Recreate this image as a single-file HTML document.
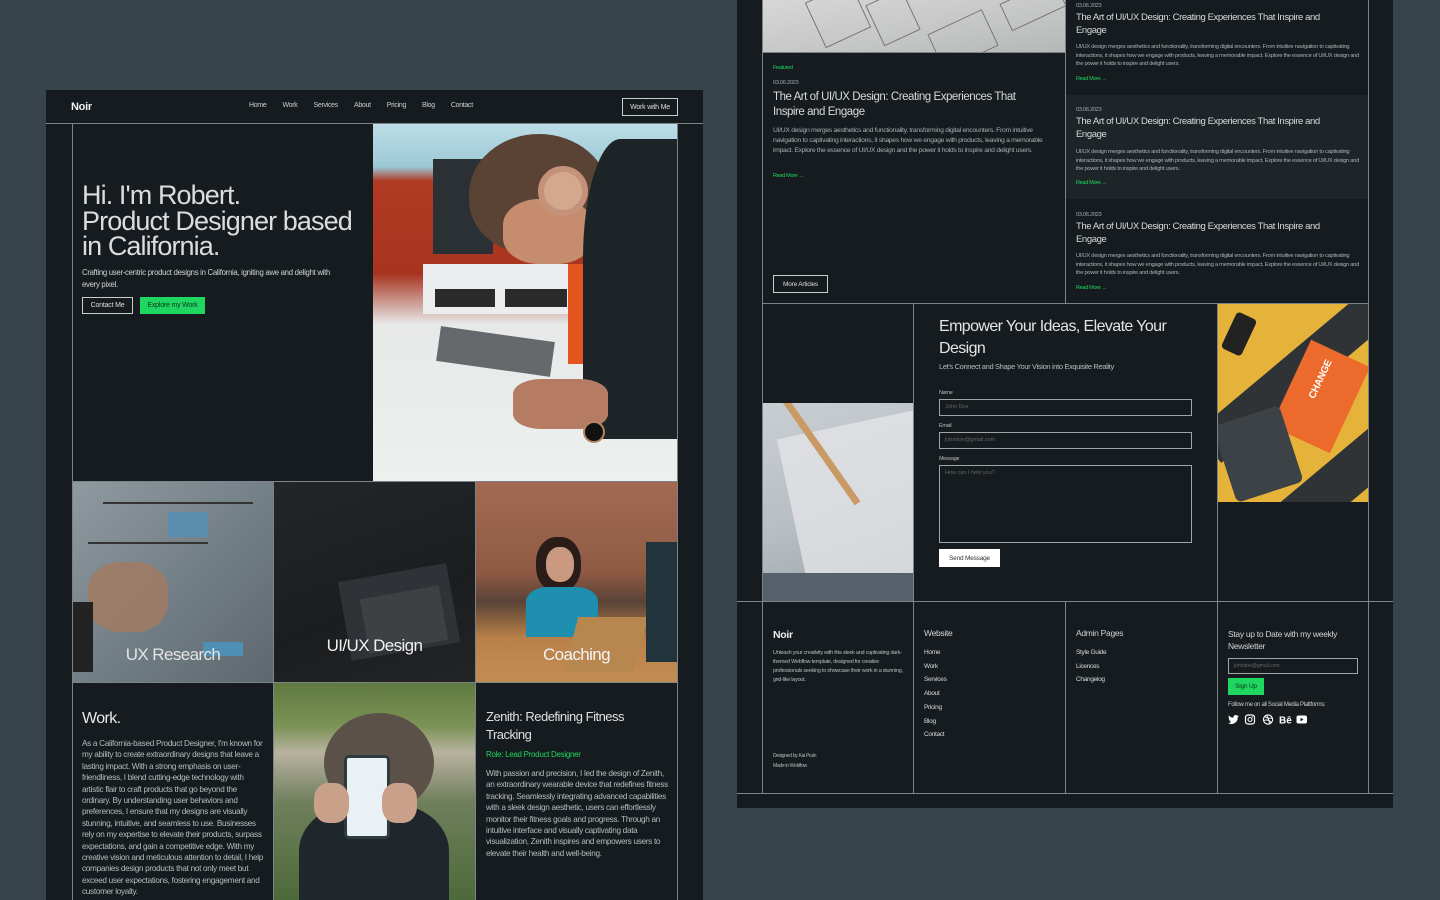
<!DOCTYPE html>
<html><head><meta charset="utf-8"><style>
*{margin:0;padding:0;box-sizing:border-box}
body{width:1440px;height:900px;background:#38444b;overflow:hidden;position:relative;font-family:"Liberation Sans",sans-serif;color:#e6e8e8}
.p{position:absolute;background:#151b1e}
.a{position:absolute}
.vl{position:absolute;width:1px;background:#7d8488}
.hl{position:absolute;height:1px;background:#7d8488}
.t{position:absolute;letter-spacing:-0.3px}
.g{color:#1ed660}
.btn{position:absolute;border:1px solid #c9cccd;font-size:7px;color:#ddd;display:flex;align-items:center;justify-content:center;letter-spacing:-0.2px}
.sm{font-size:6px;color:#a8adb0;line-height:9px;letter-spacing:-0.2px}
.inp{position:absolute;border:1px solid #a0a5a8;font-size:5.5px;color:#666;padding:4px 5px}
</style></head><body>

<!-- LEFT PANEL -->
<div class="p" style="left:46px;top:90px;width:657px;height:810px"></div>
<div class="t" style="left:71px;top:101px;font-size:11px;font-weight:bold;color:#eee">Noir</div>
<div class="t" style="left:249px;top:102px;font-size:7px;color:#ccc;word-spacing:0"><span style="margin-right:16px">Home</span><span style="margin-right:16px">Work</span><span style="margin-right:16px">Services</span><span style="margin-right:16px">About</span><span style="margin-right:16px">Pricing</span><span style="margin-right:16px">Blog</span><span>Contact</span></div>
<div class="btn" style="left:622px;top:98px;width:56px;height:18px">Work with Me</div>
<div class="hl" style="left:46px;top:123px;width:657px"></div>
<div class="vl" style="left:72px;top:124px;height:776px"></div>
<div class="vl" style="left:677px;top:124px;height:776px"></div>

<div class="t" style="left:82px;top:183px;font-size:27px;line-height:25.5px;letter-spacing:-0.9px;color:#dcdcdc;font-weight:300">Hi. I'm Robert.<br>Product Designer based<br>in California.</div>
<div class="t" style="left:82px;top:267px;font-size:7.8px;line-height:12px;color:#d0d3d4;width:258px">Crafting user-centric product designs in California, igniting awe and delight with every pixel.</div>
<div class="btn" style="left:82px;top:297px;width:51px;height:17px">Contact Me</div>
<div class="btn" style="left:140px;top:297px;width:65px;height:17px;background:#1ed660;border-color:#1ed660;color:#0d3a1e">Explore my Work</div>

<!-- hero image -->
<div class="a" style="left:373px;top:124px;width:304px;height:357px;overflow:hidden;background:linear-gradient(180deg,#bcdde6 0%,#9cc9d6 12%,#b03a22 16%,#a83420 42%,#e7e8e8 56%,#eef0f0 100%)">
  <div class="a" style="left:60px;top:35px;width:60px;height:95px;background:#2a3034"></div>
  <div class="a" style="left:50px;top:140px;width:150px;height:50px;background:#ecedee"></div>
  <div class="a" style="left:62px;top:165px;width:60px;height:18px;background:#2b2b2b"></div>
  <div class="a" style="left:132px;top:165px;width:62px;height:18px;background:#2b2b2b"></div>
  <div class="a" style="left:195px;top:140px;width:109px;height:100px;background:#e4541e"></div>
  <div class="a" style="left:96px;top:10px;width:140px;height:120px;border-radius:50% 50% 40% 45%;background:#5a4234"></div>
  <div class="a" style="left:130px;top:75px;width:90px;height:65px;border-radius:40%;background:#c68c6e"></div>
  <div class="a" style="left:210px;top:15px;width:94px;height:300px;border-radius:40% 0 0 20%;background:#1d2428"></div>
  <div class="a" style="left:165px;top:42px;width:50px;height:50px;border-radius:50%;background:#d4a88f;border:6px solid #c4917a"></div>
  <div class="a" style="left:65px;top:210px;width:115px;height:35px;background:#3a3e42;transform:rotate(8deg);opacity:.75"></div>
  <div class="a" style="left:140px;top:255px;width:95px;height:50px;border-radius:30%;background:#b57c63"></div>
  <div class="a" style="left:210px;top:297px;width:22px;height:22px;border-radius:50%;background:#111;border:2px solid #b38560"></div>
</div>

<div class="hl" style="left:72px;top:481px;width:605px"></div>
<!-- services row -->
<div class="a" style="left:73px;top:482px;width:200px;height:200px;background:linear-gradient(135deg,#8f9aa0,#6f7b82 60%,#5d686e)">
  <div class="a" style="left:30px;top:20px;width:150px;height:2px;background:#333"></div>
  <div class="a" style="left:15px;top:60px;width:120px;height:2px;background:#333"></div>
  <div class="a" style="left:95px;top:30px;width:40px;height:25px;background:#5a8eae"></div>
  <div class="a" style="left:130px;top:160px;width:40px;height:14px;background:#4f8fb5"></div>
  <div class="a" style="left:15px;top:80px;width:80px;height:70px;border-radius:40%;background:#a07a62;opacity:.85"></div>
  <div class="a" style="left:0;top:120px;width:20px;height:70px;background:#222"></div>
</div>
<div class="t" style="left:73px;top:645px;width:200px;text-align:center;font-size:17px;color:#e4e4e4;letter-spacing:-0.6px">UX Research</div>
<div class="vl" style="left:273px;top:482px;height:418px"></div>
<div class="a" style="left:274px;top:482px;width:201px;height:200px;background:linear-gradient(160deg,#232629,#1b1d1f 60%,#222426)">
  <div class="a" style="left:70px;top:90px;width:110px;height:80px;background:#2f3236;transform:rotate(-10deg)"></div>
  <div class="a" style="left:90px;top:110px;width:80px;height:55px;background:#3e4144;transform:rotate(-10deg)"></div>
</div>
<div class="t" style="left:274px;top:636px;width:201px;text-align:center;font-size:17px;color:#f0f0f0;letter-spacing:-0.6px">UI/UX Design</div>
<div class="vl" style="left:475px;top:482px;height:418px"></div>
<div class="a" style="left:476px;top:482px;width:201px;height:200px;background:linear-gradient(180deg,#a36a52 0%,#8f5a44 45%,#5a4337 60%,#b98149 78%,#c28d52 100%)">
  <div class="a" style="left:60px;top:55px;width:45px;height:55px;border-radius:45%;background:#2a1c18"></div>
  <div class="a" style="left:70px;top:65px;width:28px;height:35px;border-radius:45%;background:#c99a80"></div>
  <div class="a" style="left:50px;top:105px;width:72px;height:50px;border-radius:30% 30% 0 0;background:#1f8fb0"></div>
  <div class="a" style="left:95px;top:135px;width:70px;height:55px;background:#b7874f;transform:skewX(-15deg)"></div>
  <div class="a" style="left:170px;top:60px;width:31px;height:120px;background:#22343b"></div>
</div>
<div class="t" style="left:476px;top:645px;width:201px;text-align:center;font-size:17px;color:#f4f4f4;letter-spacing:-0.6px">Coaching</div>

<div class="hl" style="left:72px;top:682px;width:605px"></div>
<div class="t" style="left:82px;top:710px;font-size:16px;color:#e8e8e8;letter-spacing:-0.6px">Work.</div>
<div class="t" style="left:82px;top:738px;width:182px;font-size:8.2px;line-height:11.4px;color:#b8bcbe;letter-spacing:-0.3px">As a California-based Product Designer, I'm known for my ability to create extraordinary designs that leave a lasting impact. With a strong emphasis on user-friendliness, I blend cutting-edge technology with artistic flair to craft products that go beyond the ordinary. By understanding user behaviors and preferences, I ensure that my designs are visually stunning, intuitive, and seamless to use. Businesses rely on my expertise to elevate their products, surpass expectations, and gain a competitive edge. With my creative vision and meticulous attention to detail, I help companies design products that not only meet but exceed user expectations, fostering engagement and customer loyalty.</div>
<div class="a" style="left:274px;top:683px;width:201px;height:217px;overflow:hidden;background:linear-gradient(180deg,#5f7a40 0%,#7b9356 20%,#b9b2a0 32%,#6f7f5c 55%,#4d6a3a 100%)">
  <div class="a" style="left:50px;top:30px;width:110px;height:100px;border-radius:50%;background:#5b5148"></div>
  <div class="a" style="left:25px;top:120px;width:150px;height:120px;border-radius:40% 40% 0 0;background:#20272c"></div>
  <div class="a" style="left:70px;top:72px;width:46px;height:84px;border-radius:5px;background:#e9f1f4;border:3px solid #2d3b40"></div>
  <div class="a" style="left:40px;top:100px;width:35px;height:40px;border-radius:40%;background:#c9a08a"></div>
  <div class="a" style="left:108px;top:100px;width:35px;height:40px;border-radius:40%;background:#c9a08a"></div>
</div>
<div class="t" style="left:486px;top:708px;width:160px;font-size:13px;line-height:17.5px;color:#e0e0e0;letter-spacing:-0.5px">Zenith: Redefining Fitness Tracking</div>
<div class="t g" style="left:486px;top:750px;font-size:8px">Role: Lead Product Designer</div>
<div class="t" style="left:486px;top:768px;width:182px;font-size:8.2px;line-height:11.4px;color:#b8bcbe;letter-spacing:-0.3px">With passion and precision, I led the design of Zenith, an extraordinary wearable device that redefines fitness tracking. Seamlessly integrating advanced capabilities with a sleek design aesthetic, users can effortlessly monitor their fitness goals and progress. Through an intuitive interface and visually captivating data visualization, Zenith inspires and empowers users to elevate their health and well-being.</div>

<!-- RIGHT PANEL -->
<div class="p" style="left:737px;top:0;width:656px;height:808px"></div>
<div class="vl" style="left:762px;top:0;height:793px"></div>
<div class="vl" style="left:1368px;top:0;height:793px"></div>
<div class="vl" style="left:1065px;top:0;height:303px"></div>
<div class="a" style="left:763px;top:0;width:302px;height:52px;overflow:hidden;background:linear-gradient(170deg,#d6d7d6,#c4c6c5 60%,#b5b8b7)">
  <div class="a" style="left:50px;top:-10px;width:50px;height:50px;border:1px solid #777;transform:rotate(-25deg)"></div>
  <div class="a" style="left:110px;top:-5px;width:40px;height:45px;border:1px solid #777;transform:rotate(-25deg)"></div>
  <div class="a" style="left:170px;top:20px;width:60px;height:40px;border:1px solid #777;transform:rotate(-25deg)"></div>
  <div class="a" style="left:240px;top:-10px;width:60px;height:30px;border:1px solid #777;transform:rotate(-25deg)"></div>
</div>
<div class="hl" style="left:762px;top:52px;width:303px"></div>
<div class="t g" style="left:773px;top:65px;font-size:5.5px">Featured</div>
<div class="t sm" style="left:773px;top:79px;font-size:5.5px">03.06.2023</div>
<div class="t" style="left:773px;top:90px;width:255px;font-size:11.5px;line-height:15px;color:#d8dadb;letter-spacing:-0.45px">The Art of UI/UX Design: Creating Experiences That Inspire and Engage</div>
<div class="t" style="left:773px;top:126px;width:275px;font-size:6.8px;line-height:10px;color:#a8adb0;letter-spacing:-0.3px">UI/UX design merges aesthetics and functionality, transforming digital encounters. From intuitive navigation to captivating interactions, it shapes how we engage with products, leaving a memorable impact. Explore the essence of UI/UX design and the power it holds to inspire and delight users.</div>
<div class="t g" style="left:773px;top:173px;font-size:5.5px">Read More &#8594;</div>
<div class="btn" style="left:773px;top:275px;width:55px;height:18px;font-size:6.5px">More Articles</div>

<div class="a" style="left:1066px;top:95px;width:302px;height:104px;background:#1d2528"></div>
<div class="t sm" style="left:1076px;top:2px;font-size:5.5px">03.06.2023</div>
<div class="t" style="left:1076px;top:12px;width:270px;font-size:9.5px;line-height:12.5px;color:#d8dadb;letter-spacing:-0.4px">The Art of UI/UX Design: Creating Experiences That Inspire and Engage</div>
<div class="t" style="left:1076px;top:43px;width:285px;font-size:5.8px;line-height:8.7px;color:#a8adb0;letter-spacing:-0.3px">UI/UX design merges aesthetics and functionality, transforming digital encounters. From intuitive navigation to captivating interactions, it shapes how we engage with products, leaving a memorable impact. Explore the essence of UI/UX design and the power it holds to inspire and delight users.</div>
<div class="t g" style="left:1076px;top:76px;font-size:5.5px">Read More &#8594;</div>

<div class="t sm" style="left:1076px;top:106px;font-size:5.5px">03.06.2023</div>
<div class="t" style="left:1076px;top:116px;width:270px;font-size:9.5px;line-height:12.5px;color:#d8dadb;letter-spacing:-0.4px">The Art of UI/UX Design: Creating Experiences That Inspire and Engage</div>
<div class="t" style="left:1076px;top:148px;width:285px;font-size:5.8px;line-height:8.7px;color:#a8adb0;letter-spacing:-0.3px">UI/UX design merges aesthetics and functionality, transforming digital encounters. From intuitive navigation to captivating interactions, it shapes how we engage with products, leaving a memorable impact. Explore the essence of UI/UX design and the power it holds to inspire and delight users.</div>
<div class="t g" style="left:1076px;top:180px;font-size:5.5px">Read More &#8594;</div>

<div class="t sm" style="left:1076px;top:211px;font-size:5.5px">03.06.2023</div>
<div class="t" style="left:1076px;top:221px;width:270px;font-size:9.5px;line-height:12.5px;color:#d8dadb;letter-spacing:-0.4px">The Art of UI/UX Design: Creating Experiences That Inspire and Engage</div>
<div class="t" style="left:1076px;top:252px;width:285px;font-size:5.8px;line-height:8.7px;color:#a8adb0;letter-spacing:-0.3px">UI/UX design merges aesthetics and functionality, transforming digital encounters. From intuitive navigation to captivating interactions, it shapes how we engage with products, leaving a memorable impact. Explore the essence of UI/UX design and the power it holds to inspire and delight users.</div>
<div class="t g" style="left:1076px;top:285px;font-size:5.5px">Read More &#8594;</div>

<div class="hl" style="left:762px;top:303px;width:606px"></div>
<!-- contact -->
<div class="vl" style="left:913px;top:303px;height:490px"></div>
<div class="vl" style="left:1217px;top:303px;height:490px"></div>
<div class="a" style="left:763px;top:403px;width:150px;height:198px;overflow:hidden;background:linear-gradient(160deg,#c9ced2,#b8bfc5 50%,#9aa3aa)">
  <div class="a" style="left:30px;top:20px;width:140px;height:170px;background:#e2e4e6;transform:rotate(-12deg);opacity:.8"></div>
  <div class="a" style="left:20px;top:0;width:7px;height:125px;background:#c99a63;transform:rotate(-35deg);transform-origin:top left"></div>
  <div class="a" style="left:0;top:170px;width:150px;height:28px;background:#56606a"></div>
</div>
<div class="t" style="left:939px;top:316px;width:260px;font-size:16px;line-height:22px;color:#e4e4e4;letter-spacing:-0.6px">Empower Your Ideas, Elevate Your Design</div>
<div class="t" style="left:939px;top:362px;font-size:7.5px;color:#b8bcbe;letter-spacing:-0.35px">Let's Connect and Shape Your Vision into Exquisite Reality</div>
<div class="t" style="left:939px;top:390px;font-size:5.5px;color:#bbb">Name</div>
<div class="inp" style="left:939px;top:399px;width:253px;height:17px">John Doe</div>
<div class="t" style="left:939px;top:423px;font-size:5.5px;color:#bbb">Email</div>
<div class="inp" style="left:939px;top:432px;width:253px;height:17px">johndoe@gmail.com</div>
<div class="t" style="left:939px;top:456px;font-size:5.5px;color:#bbb">Message</div>
<div class="inp" style="left:939px;top:465px;width:253px;height:78px">How can I help you?</div>
<div class="btn" style="left:939px;top:549px;width:61px;height:18px;background:#fff;border-color:#fff;color:#333;font-size:6.5px">Send Message</div>
<div class="a" style="left:1218px;top:304px;width:150px;height:198px;overflow:hidden;background:#e6b33a">
  <div class="a" style="left:-40px;top:40px;width:260px;height:40px;background:#303336;transform:rotate(-40deg)"></div>
  <div class="a" style="left:40px;top:140px;width:200px;height:45px;background:#303336;transform:rotate(-40deg)"></div>
  <div class="a" style="left:70px;top:45px;width:65px;height:95px;background:#ec6a2c;transform:rotate(25deg)"></div>
  <div class="a" style="left:10px;top:10px;width:22px;height:40px;background:#222;border-radius:4px;transform:rotate(25deg)"></div>
  <div class="a" style="left:5px;top:110px;width:70px;height:80px;background:#3d4246;border-radius:6px;transform:rotate(-18deg)"></div>
  <div class="t" style="left:82px;top:70px;font-size:10px;font-weight:bold;color:#fff;transform:rotate(-65deg)">CHANGE</div>
</div>

<div class="hl" style="left:737px;top:601px;width:656px"></div>
<!-- footer -->
<div class="vl" style="left:1065px;top:601px;height:192px"></div>
<div class="t" style="left:773px;top:629px;font-size:10.5px;font-weight:bold;color:#eee">Noir</div>
<div class="t" style="left:773px;top:649px;width:132px;font-size:5.5px;line-height:9px;color:#b8bcbe;letter-spacing:-0.25px">Unleash your creativity with this sleek and captivating dark-themed Webflow template, designed for creative professionals seeking to showcase their work in a stunning, grid-like layout.</div>
<div class="t" style="left:773px;top:752px;font-size:5px;line-height:9.5px;color:#b8bcbe">Designed by Kai Pruin<br>Made in Webflow</div>
<div class="t" style="left:924px;top:628px;font-size:8.5px;color:#d0d2d3;letter-spacing:-0.3px">Website</div>
<div class="t" style="left:924px;top:646px;font-size:6.5px;line-height:13.7px;color:#d8dadb">Home<br>Work<br>Services<br>About<br>Pricing<br>Blog<br>Contact</div>
<div class="t" style="left:1076px;top:628px;font-size:8.5px;color:#d0d2d3;letter-spacing:-0.3px">Admin Pages</div>
<div class="t" style="left:1076px;top:646px;font-size:6.5px;line-height:13.7px;color:#d8dadb">Style Guide<br>Licences<br>Changelog</div>
<div class="t" style="left:1228px;top:628px;width:135px;font-size:8.5px;line-height:12px;color:#d0d2d3;letter-spacing:-0.3px">Stay up to Date with my weekly Newsletter</div>
<div class="inp" style="left:1228px;top:658px;width:130px;height:16px;font-size:5px">johndoe@gmail.com</div>
<div class="btn" style="left:1228px;top:678px;width:36px;height:17px;background:#1ed660;border-color:#1ed660;color:#0d3a1e;font-size:6.5px">Sign Up</div>
<div class="t" style="left:1228px;top:702px;font-size:6px;color:#ccc">Follow me on all Social Media Plattforms:</div>
<svg class="a" style="left:1228px;top:714px" width="90" height="12" viewBox="0 0 90 12" fill="#fff">
  <path d="M11 2.2c-.4.2-.8.3-1.3.3.5-.3.8-.7 1-1.2-.4.3-.9.4-1.4.5A2.2 2.2 0 0 0 5.5 3.8 6.3 6.3 0 0 1 .9 1.5a2.2 2.2 0 0 0 .7 3 2 2 0 0 1-1-.3c0 1.1.8 2 1.8 2.2-.3.1-.7.1-1 0 .3.9 1.1 1.5 2 1.5A4.5 4.5 0 0 1 0 9a6.3 6.3 0 0 0 9.7-5.6c.5-.3.9-.7 1.3-1.2z"/>
  <rect x="17.5" y="1" width="9" height="9" rx="2.5" fill="none" stroke="#fff" stroke-width="1.2"/><circle cx="22" cy="5.5" r="2" fill="none" stroke="#fff" stroke-width="1.1"/><circle cx="24.5" cy="3" r=".6"/>
  <circle cx="40" cy="5.5" r="4.6" fill="none" stroke="#fff" stroke-width="1.1"/><path d="M36.5 2.5c2 1.5 5 2 7.5 1.5M35.5 6.5c3-1 6-.5 8 2.5M38.5 1c1.5 2.5 3 6 3 9.3" fill="none" stroke="#fff" stroke-width=".9"/>
  <text x="51" y="9.5" font-family="Liberation Sans" font-weight="bold" font-size="10" fill="#fff">Bē</text>
  <rect x="68.5" y="1.5" width="10.5" height="8" rx="2"/><path d="M72.5 3.6v3.8l3-1.9z" fill="#151b1e"/>
</svg>
<div class="hl" style="left:737px;top:793px;width:656px"></div>
</body></html>
